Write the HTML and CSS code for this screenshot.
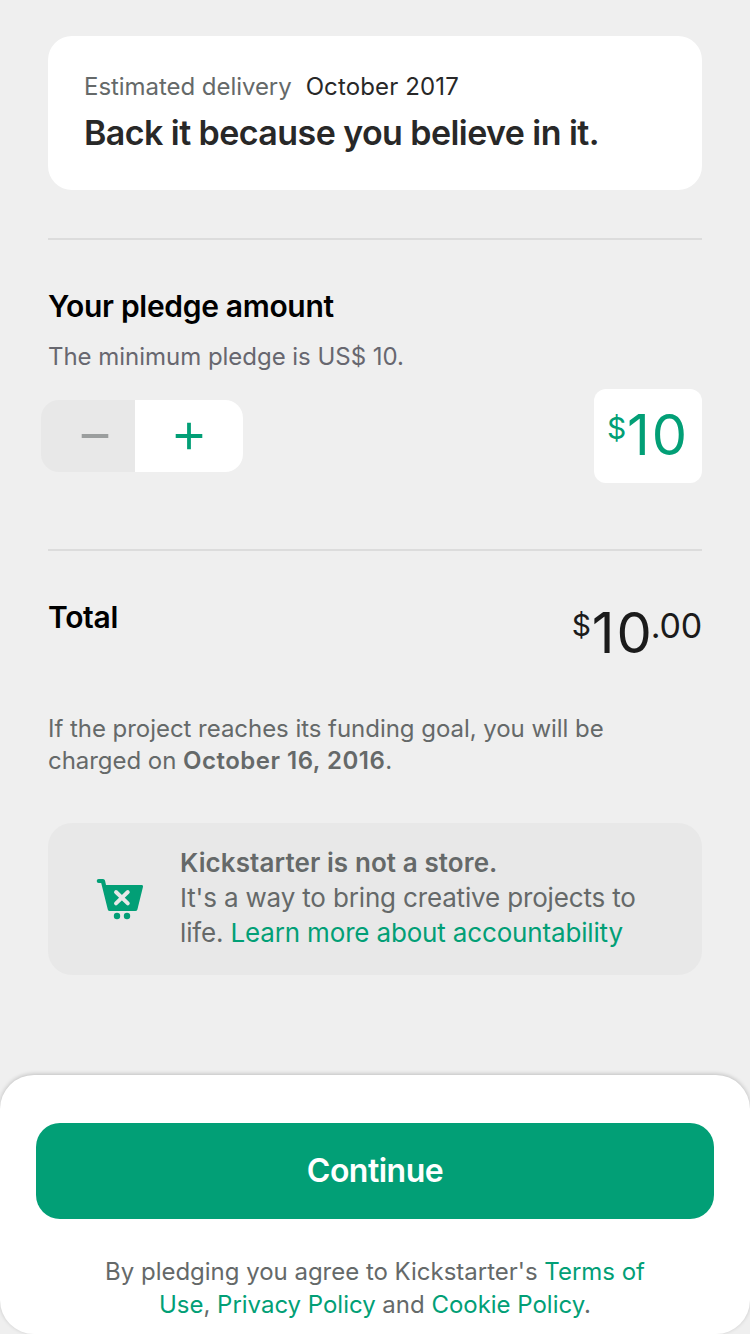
FILE: index.html
```html
<!DOCTYPE html>
<html lang="en">
<head>
<meta charset="utf-8">
<title>Pledge</title>
<link rel="stylesheet" href="styles.css">
</head>
<body>
<main class="content">
  <section class="reward">
    <p class="delivery"><span class="delivery-label">Estimated delivery</span><span class="delivery-date">October 2017</span></p>
    <h1 class="reward-title">Back it because you believe in it.</h1>
  </section>
  <section class="pledge">
    <h2 class="heading">Your pledge amount</h2>
    <p class="minimum">The minimum pledge is US$ 10.</p>
    <div class="amount-row">
      <div class="stepper">
        <button class="step step-minus" aria-label="Decrease"><svg width="28" height="28" viewBox="0 0 28 28"><path d="M.7 14h26.6" stroke="#9b9e9e" stroke-width="3.8"/></svg></button>
        <button class="step step-plus" aria-label="Increase"><svg width="28" height="28" viewBox="0 0 28 28"><path d="M.7 14h26.6M14 .7v26.6" stroke="#029f76" stroke-width="3.8"/></svg></button>
      </div>
      <div class="amount"><span class="amount-currency">$</span><span class="amount-value">10</span></div>
    </div>
  </section>
  <section class="total">
    <h2 class="heading">Total</h2>
    <div class="total-price"><span class="total-currency">$</span><span class="total-value">10</span><span class="total-cents">.00</span></div>
  </section>
  <p class="charge">If the project reaches its funding goal, you will be<br>charged on <b>October 16, 2016</b>.</p>
  <aside class="notice">
    <svg class="cart" width="48" height="42" viewBox="0 0 48 42"><path d="M2.7 1H7Q8.6 1 9 2.6L10 7H45.8Q47.4 7 47 8.7L41.4 31.4Q41 33 39.2 33H13.8Q12.2 33 11.8 31.4L5.2 5H2.7A2 2 0 0 1 2.7 1Z" fill="#029f76"/><path d="M20 14L31.8 25.4M31.8 14L20 25.4" stroke="#e8e8e8" stroke-width="3.9" stroke-linecap="round"/><circle cx="21" cy="38" r="3.2" fill="#029f76"/><circle cx="31" cy="38" r="3.2" fill="#029f76"/></svg>
    <p class="notice-text"><b>Kickstarter is not a store.</b><br>It's a way to bring creative projects to<br>life. <a>Learn more about accountability</a></p>
  </aside>
</main>
<footer class="sheet">
  <button class="continue">Continue</button>
  <p class="legal">By pledging you agree to Kickstarter's <a>Terms of</a><br><a>Use</a>, <a>Privacy Policy</a> and <a>Cookie Policy</a>.</p>
</footer>
</body>
</html>
```
FILE: styles.css
```css
* { box-sizing: border-box; }
body { margin: 0; height: 1334px; overflow: hidden; background: #efefef; color: #656969; font-family: Inter, "Liberation Sans", sans-serif; display: flex; flex-direction: column; }
p, h1, h2 { margin: 0; }
b { font-weight: 600; }
a { color: #029f76; }
button { border: 0; padding: 0; font: inherit; }
svg { display: block; }
.content { padding: 36px 48px 0; height: 1075px; flex: none; }
.reward { height: 154px; border-radius: 24px; background: #fff; padding: 35px 36px; white-space: nowrap; }
.delivery { font-size: 24px; line-height: 32px; display: flex; gap: 14px; }
.delivery-label { letter-spacing: -.05px; }
.delivery-date { color: #282828; letter-spacing: .13px; }
.reward-title { margin: 9px 0 0; color: #282828; font-size: 34px; line-height: 42px; font-weight: 600; letter-spacing: -.57px; }
.pledge { margin-top: 48px; height: 311px; border-top: 2px solid #dcdcdc; padding-top: 48px; }
.heading { color: #000; font-size: 30px; line-height: 36px; font-weight: 600; letter-spacing: -.32px; }
.minimum { color: #67676f; margin-top: 16px; font-size: 24px; line-height: 34px; letter-spacing: -.03px; }
.amount-row { display: flex; justify-content: space-between; margin: 15px 0 0 -7px; height: 94px; align-items: center; }
.stepper { width: 202px; height: 72px; display: flex; border-radius: 18px; overflow: hidden; }
.step { display: flex; justify-content: center; align-items: center; }
.step-minus { width: 94px; padding-left: 14px; background: #e8e8e8; }
.step-plus { width: 108px; background: #fff; }
.amount { width: 108px; height: 94px; border-radius: 12px; background: #fff; color: #029f76; display: flex; padding-left: 13px; }
.amount-currency { font-size: 30px; line-height: 36px; margin-top: 21px; width: 20px; }
.amount-value { font-size: 56px; line-height: 90px; margin-top: 1px; letter-spacing: 2px; }
.total { height: 164px; border-top: 2px solid #dcdcdc; padding-top: 48px; display: flex; justify-content: space-between; }
.total-price { display: flex; color: #1b1b1b; }
.total-currency { font-size: 30px; line-height: 36px; margin-top: 8px; width: 20px; }
.total-value { font-size: 56px; line-height: 66px; margin-top: 1px; letter-spacing: 2px; }
.total-cents { font-size: 34px; line-height: 40px; margin: 7px 0 0 -3px; letter-spacing: -.2px; }
.charge { font-size: 24px; line-height: 32px; letter-spacing: -.04px; white-space: nowrap; }
.charge b { letter-spacing: .5px; }
.notice { margin-top: 46px; height: 152px; border-radius: 24px; background: #e8e8e8; display: flex; padding: 22px 0 0 48px; }
.cart { margin-top: 33px; flex: none; }
.notice-text { margin-left: 36px; font-size: 26px; line-height: 35px; white-space: nowrap; letter-spacing: -.16px; }
.notice-text b { letter-spacing: .1px; }
.sheet { height: 259px; flex: none; background: #fff; border-radius: 34px; padding: 48px 36px 0; box-shadow: 0 -1px 4px rgba(0,0,0,.2); text-align: center; }
.continue { display: block; width: 100%; height: 96px; padding-bottom: 1px; border-radius: 24px; background: #029f76; color: #fff; font-size: 32px; font-weight: 600; letter-spacing: -.5px; }
.legal { margin-top: 36px; font-size: 24px; line-height: 33px; letter-spacing: -.02px; white-space: nowrap; }
```
